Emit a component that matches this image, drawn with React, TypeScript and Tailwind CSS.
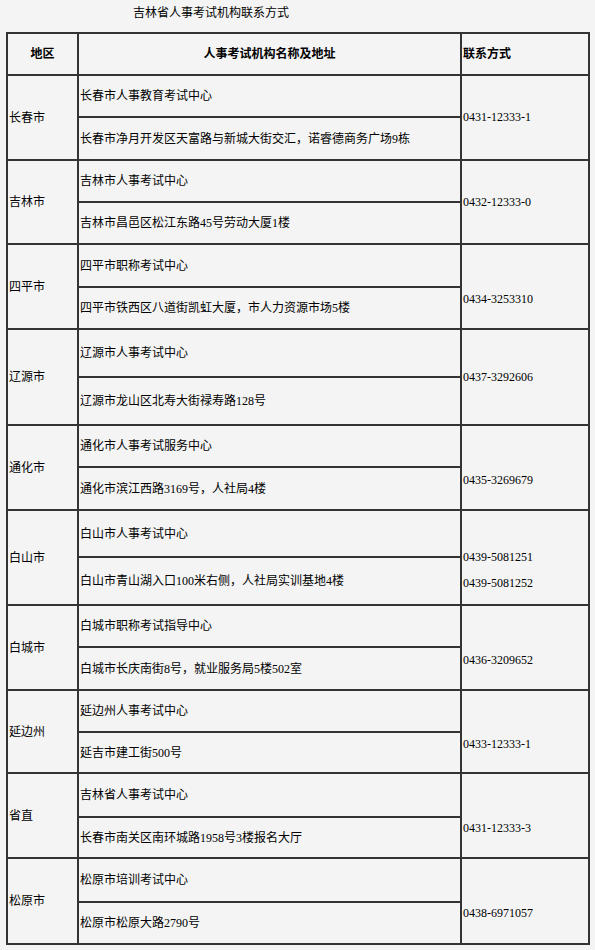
type Office = {
  region: string;
  name: string;
  addr: string;
  phones: string[];
  topH: string;
  botH: string;
  shift: boolean;
};

const offices: Office[] = [
  {
    region: "长春市",
    name: "长春市人事教育考试中心",
    addr: "长春市净月开发区天富路与新城大街交汇，诺睿德商务广场9栋",
    phones: ["0431-12333-1"],
    topH: "h-[42px]",
    botH: "h-[43px]",
    shift: false,
  },
  {
    region: "吉林市",
    name: "吉林市人事考试中心",
    addr: "吉林市昌邑区松江东路45号劳动大厦1楼",
    phones: ["0432-12333-0"],
    topH: "h-[42px]",
    botH: "h-[42px]",
    shift: false,
  },
  {
    region: "四平市",
    name: "四平市职称考试中心",
    addr: "四平市铁西区八道街凯虹大厦，市人力资源市场5楼",
    phones: ["0434-3253310"],
    topH: "h-[43px]",
    botH: "h-[42px]",
    shift: true,
  },
  {
    region: "辽源市",
    name: "辽源市人事考试中心",
    addr: "辽源市龙山区北寿大街禄寿路128号",
    phones: ["0437-3292606"],
    topH: "h-[48px]",
    botH: "h-[48px]",
    shift: false,
  },
  {
    region: "通化市",
    name: "通化市人事考试服务中心",
    addr: "通化市滨江西路3169号，人社局4楼",
    phones: ["0435-3269679"],
    topH: "h-[42px]",
    botH: "h-[43px]",
    shift: true,
  },
  {
    region: "白山市",
    name: "白山市人事考试中心",
    addr: "白山市青山湖入口100米右侧，人社局实训基地4楼",
    phones: ["0439-5081251", "0439-5081252"],
    topH: "h-[47px]",
    botH: "h-[48px]",
    shift: true,
  },
  {
    region: "白城市",
    name: "白城市职称考试指导中心",
    addr: "白城市长庆南街8号，就业服务局5楼502室",
    phones: ["0436-3209652"],
    topH: "h-[42px]",
    botH: "h-[43px]",
    shift: true,
  },
  {
    region: "延边州",
    name: "延边州人事考试中心",
    addr: "延吉市建工街500号",
    phones: ["0433-12333-1"],
    topH: "h-[42px]",
    botH: "h-[41px]",
    shift: true,
  },
  {
    region: "省直",
    name: "吉林省人事考试中心",
    addr: "长春市南关区南环城路1958号3楼报名大厅",
    phones: ["0431-12333-3"],
    topH: "h-[44px]",
    botH: "h-[41px]",
    shift: true,
  },
  {
    region: "松原市",
    name: "松原市培训考试中心",
    addr: "松原市松原大路2790号",
    phones: ["0438-6971057"],
    topH: "h-[44px]",
    botH: "h-[42px]",
    shift: true,
  },
];

const cell = "border-2 border-[#333] px-[1px] align-middle text-left";

export default function App() {
  return (
    <div className="min-h-[950px] w-[595px] bg-[#f4f4f4] font-['Liberation_Serif','Noto_Sans_CJK_SC',serif] text-[12px] text-black">
      <div className="h-[32px] pl-[133px] pt-[5px] leading-[17px]">
        吉林省人事考试机构联系方式
      </div>

      <table className="ml-[6px] w-[582px] table-fixed border-collapse border-2 border-[#333]">
        <colgroup>
          <col className="w-[71px]" />
          <col className="w-[383px]" />
          <col className="w-[128px]" />
        </colgroup>
        <thead>
          <tr className="h-[42px]">
            <th className="border-2 border-[#333] text-center align-middle font-bold">
              地区
            </th>
            <th className="border-2 border-[#333] text-center align-middle font-bold">
              人事考试机构名称及地址
            </th>
            <th className="border-2 border-[#333] px-[1px] text-left align-middle font-bold">
              联系方式
            </th>
          </tr>
        </thead>
        <tbody>
          {offices.map((o) => [
            <tr key={o.region + "-a"} className={o.topH}>
              <td rowSpan={2} className={cell}>
                {o.region}
              </td>
              <td className={cell}>{o.name}</td>
              <td rowSpan={2} className={cell}>
                <div className={o.shift ? "pt-[25px]" : ""}>
                  {o.phones.map((p, i) => (
                    <div
                      key={p}
                      className={i > 0 ? "mt-[9px] leading-[17px]" : "leading-[17px]"}
                    >
                      {p}
                    </div>
                  ))}
                </div>
              </td>
            </tr>,
            <tr key={o.region + "-b"} className={o.botH}>
              <td className={cell}>{o.addr}</td>
            </tr>,
          ])}
        </tbody>
      </table>
    </div>
  );
}
